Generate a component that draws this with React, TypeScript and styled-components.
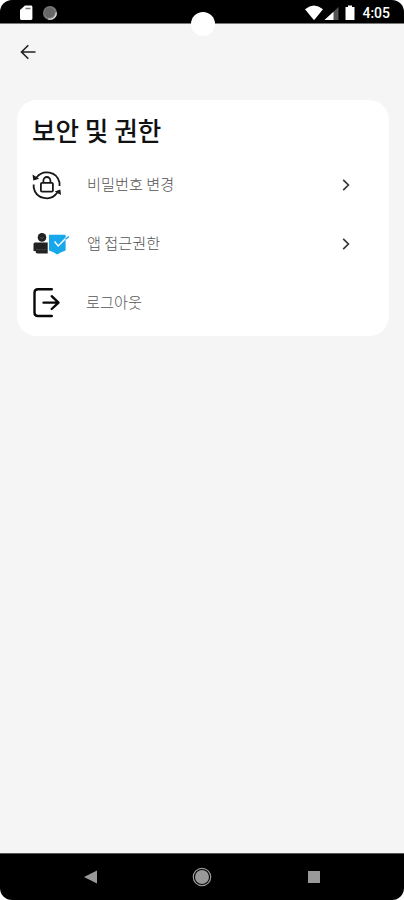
import React from "react";
import styled, { createGlobalStyle } from "styled-components";

const GlobalStyle = createGlobalStyle`
  * { box-sizing: border-box; }
  body { margin: 0; background: #fff; font-family: "Noto Sans CJK KR", sans-serif; }
  svg { display: block; flex: none; }
`;

const Phone = styled.div`
  position: relative;
  display: flex;
  flex-direction: column;
  width: 404px;
  height: 900px;
  overflow: hidden;
  border-radius: 12px;
  background: #f5f5f5;
`;

const StatusBar = styled.header`
  display: flex;
  align-items: center;
  justify-content: space-between;
  height: 24px;
  padding: 2px 14px 0 19px;
  background: #000;
  border-bottom: 1px solid #777;
`;

const StatusGroup = styled.div`
  display: flex;
  align-items: center;
`;

const Clock = styled.span`
  margin-left: 6px;
  color: #fff;
  font: 500 14px/16px Roboto, sans-serif;
`;

const Camera = styled.div`
  position: absolute;
  top: 12px;
  left: 191px;
  width: 24px;
  height: 24px;
  border-radius: 50%;
  background: #fff;
`;

const AppBar = styled.nav`
  display: flex;
  align-items: center;
  height: 56px;
  padding-left: 20px;
`;

const PlainButton = styled.button`
  padding: 0;
  border: 0;
  background: none;
`;

const Content = styled.main`
  flex: 1;
  padding: 20px 15.5px 0 16.5px;
`;

const Card = styled.section`
  height: 236px;
  border-radius: 20px;
  background: #fff;
`;

const Title = styled.h1`
  display: flex;
  align-items: center;
  height: 55px;
  margin: 0;
  padding: 5px 0 0 15.5px;
  color: #111;
  font-size: 25.6px;
  line-height: 38px;
  font-weight: 500;
  white-space: nowrap;
`;

const Row = styled.div`
  display: flex;
  align-items: center;
  height: 59px;
  padding: 0 35.5px 0 15.5px;
`;

const IconSlot = styled.div`
  display: flex;
  width: 54px;
`;

const Label = styled.span<{ $inset: number }>`
  flex: 1;
  margin-left: ${(p) => p.$inset}px;
  padding-bottom: 3px;
  color: #555;
  font-size: 15.2px;
  line-height: 22px;
  font-weight: 300;
`;

const NavBar = styled.footer`
  display: flex;
  align-items: center;
  justify-content: space-between;
  height: 47px;
  padding: 0 83px 0 83px;
  background: #000;
  border-top: 1px solid #555;
`;

const PasswordIcon = () => (
  <svg width="30" height="30" viewBox="0 0 30 30" fill="none" stroke="#181818" strokeWidth="1.8">
    <path d="M4.5 7.5A13 13 0 0 1 27.5 12.5v3.5" />
    <path d="M25.3 22.5A13 13 0 0 1 1.7 17.5v-3" />
    <path d="M0.5 4.5l.8 5.900 5.900-1.700zM29 25l-.6-5.500-5.700 2z" fill="#181818" stroke="none" />
    <rect x="8.9" y="12.8" width="12" height="8.8" rx="1.2" />
    <path d="M11.4 12.6v-2.1a3.5 3.5 0 0 1 7 0v2.1" />
  </svg>
);

const PermissionIcon = () => (
  <svg width="38" height="24" viewBox="0 0 38 24">
    <circle cx="10" cy="5.4" r="4.3" fill="#222" />
    <path d="M8.4 5.6c1 .7 2 .7 3 0" stroke="#777" strokeWidth=".7" fill="none" />
    <path d="M1.5 12q0-1.6 1.6-1.6h12.6v11.2H5.5q-2 0-2-2.5h-2z" fill="#222" />
    <path d="M3.5 17.7h11" stroke="#555" strokeWidth=".6" />
    <path d="M17 2.8h16.600v15.700q-4.600 1.400-8.400 4-3.500-2.700-8.200-4z" fill="#17a7ec" />
    <path d="M22.500 9.500l3.700 4.500L33.800 6.300" fill="none" stroke="#fff" strokeWidth="1.500" />
    <path d="M33.600 7.200L37 4.500" stroke="#17a7ec" strokeWidth="1.300" />
  </svg>
);

const LogoutIcon = () => (
  <svg width="30" height="30" viewBox="0 0 30 30" fill="none" stroke="#080808" strokeWidth="2.4" strokeLinecap="round" strokeLinejoin="round">
    <path d="M19.8 1.2H6Q2.500 1.200 2.500 4.700v19.800q0 3.500 3.500 3.500h13.800" />
    <path d="M11.500 14.600h15M19.700 8.200l6.800 6.400-6.800 6.400" />
  </svg>
);

const Chevron = () => (
  <svg width="14" height="14" viewBox="0 0 14 14" fill="none" stroke="#383838" strokeWidth="1.7">
    <path d="M4.2 1.8L9.4 7l-5.2 5.2" />
  </svg>
);

const items = [
  { label: "비밀번호 변경", Icon: PasswordIcon, arrow: true, inset: 1 },
  { label: "앱 접근권한", Icon: PermissionIcon, arrow: true, inset: 1 },
  { label: "로그아웃", Icon: LogoutIcon, arrow: false, inset: 0 },
];

export default function App() {
  return (
    <>
      <GlobalStyle />
      <Phone>
        <StatusBar>
          <StatusGroup>
            <svg width="40" height="18" viewBox="0 0 40 18">
              <path d="M6 1.5h6q1.4 0 1.4 1.4v11.7q0 1.4-1.4 1.4H2.4Q1 16 1 14.6V6z" fill="#fff" />
              <path d="M6.5 4.5h5" stroke="#777" strokeWidth="1.4" />
              <circle cx="31" cy="9" r="7" fill="#777" />
              <path d="M37.3 8.5a6.5 6.5 0 0 1-8 6.5" fill="none" stroke="#ddd" strokeWidth="1.3" />
              <circle cx="30.5" cy="8.5" r="5" fill="#666" />
            </svg>
          </StatusGroup>
          <StatusGroup>
            <svg width="51" height="18" viewBox="0 0 51 18">
              <path d="M0 5.2Q9 -2 18 5.2L9 16.3z" fill="#fff" />
              <path d="M33.5 3v13H19.5z" fill="#555" />
              <path d="M28.5 7.8V16h-9z" fill="#fff" />
              <path d="M43 1.5h4V3h2.5v13h-9V3H43z" fill="#fff" />
            </svg>
            <Clock>4:05</Clock>
          </StatusGroup>
        </StatusBar>
        <Camera />
        <AppBar>
          <PlainButton aria-label="뒤로">
            <svg width="16" height="16" viewBox="0 0 16 16" fill="none" stroke="#222" strokeWidth="1.6">
              <path d="M1.5 8h14M8.3 1.2L1.5 8l6.800 6.800" />
            </svg>
          </PlainButton>
        </AppBar>
        <Content>
          <Card>
            <Title>보안 및 권한</Title>
            {items.map(({ label, Icon, arrow, inset }) => (
              <Row key={label}>
                <IconSlot>
                  <Icon />
                </IconSlot>
                <Label $inset={inset}>{label}</Label>
                {arrow && <Chevron />}
              </Row>
            ))}
          </Card>
        </Content>
        <NavBar>
          <svg width="14" height="14" viewBox="0 0 14 14">
            <path d="M1 7L14 .5v13z" fill="#999" />
          </svg>
          <svg width="20" height="20" viewBox="0 0 20 20">
            <circle cx="10" cy="10" r="8.7" fill="none" stroke="#999" strokeWidth="1.2" />
            <circle cx="10" cy="10" r="7" fill="#999" />
          </svg>
          <svg width="14" height="14" viewBox="0 0 14 14">
            <rect x="1" y="1" width="12" height="12" fill="#999" />
          </svg>
        </NavBar>
      </Phone>
    </>
  );
}
